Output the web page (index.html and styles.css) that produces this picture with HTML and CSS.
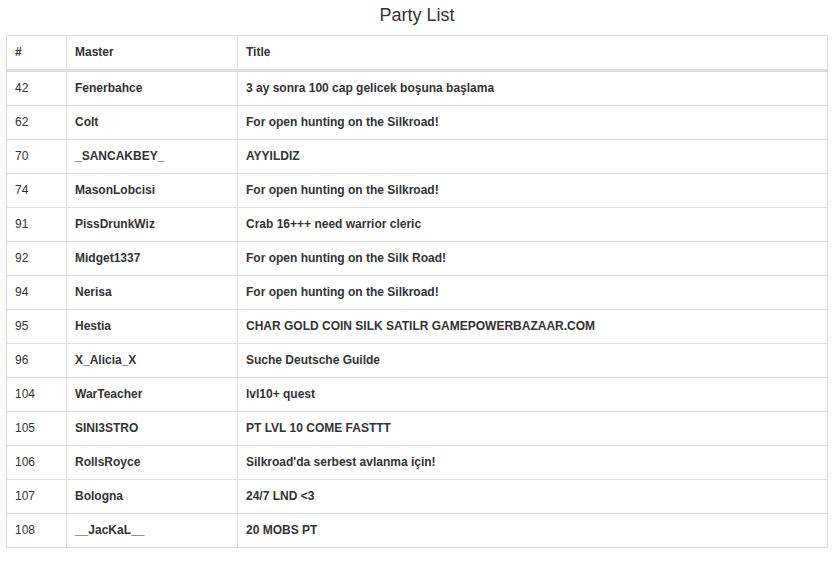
FILE: index.html
```html
<!DOCTYPE html>
<html lang="en">
<head>
<meta charset="utf-8">
<title>Party List</title>
<link rel="stylesheet" href="styles.css">
</head>
<body>
<div class="page">
  <h3 class="page-title">Party List</h3>
  <table class="party-table">
    <colgroup>
      <col class="col-id">
      <col class="col-master">
      <col class="col-title">
    </colgroup>
    <thead>
      <tr><th>#</th><th>Master</th><th>Title</th></tr>
    </thead>
    <tbody>
      <tr><td class="num">42</td><td>Fenerbahce</td><td>3 ay sonra 100 cap gelicek boşuna başlama</td></tr>
      <tr><td class="num">62</td><td>Colt</td><td>For open hunting on the Silkroad!</td></tr>
      <tr><td class="num">70</td><td>_SANCAKBEY_</td><td>AYYILDIZ</td></tr>
      <tr><td class="num">74</td><td>MasonLobcisi</td><td>For open hunting on the Silkroad!</td></tr>
      <tr><td class="num">91</td><td>PissDrunkWiz</td><td>Crab 16+++ need warrior cleric</td></tr>
      <tr><td class="num">92</td><td>Midget1337</td><td>For open hunting on the Silk Road!</td></tr>
      <tr><td class="num">94</td><td>Nerisa</td><td>For open hunting on the Silkroad!</td></tr>
      <tr><td class="num">95</td><td>Hestia</td><td>CHAR GOLD COIN SILK SATILR GAMEPOWERBAZAAR.COM</td></tr>
      <tr><td class="num">96</td><td>X_Alicia_X</td><td>Suche Deutsche Guilde</td></tr>
      <tr><td class="num">104</td><td>WarTeacher</td><td>lvl10+ quest</td></tr>
      <tr><td class="num">105</td><td>SINI3STRO</td><td>PT LVL 10 COME FASTTT</td></tr>
      <tr><td class="num">106</td><td>RollsRoyce</td><td>Silkroad'da serbest avlanma için!</td></tr>
      <tr><td class="num">107</td><td>Bologna</td><td>24/7 LND &lt;3</td></tr>
      <tr><td class="num">108</td><td>__JacKaL__</td><td>20 MOBS PT</td></tr>
    </tbody>
  </table>
</div>
</body>
</html>
```

FILE: styles.css
```css
html, body {
  margin: 0;
  padding: 0;
  background: #fff;
}

body {
  font-family: "Liberation Sans", Arial, sans-serif;
  font-size: 12px;
  line-height: 1.42857;
  color: #333;
}

.page {
  padding: 0 6px;
}

.page-title {
  margin: 5px 0 10px;
  font-size: 18px;
  font-weight: 400;
  line-height: 20px;
  text-align: center;
  color: #333;
}

.party-table {
  width: 100%;
  border-collapse: collapse;
  border-spacing: 0;
  border: 1px solid #ddd;
  table-layout: fixed;
}

.col-id { width: 60px; }
.col-master { width: 171px; }

.party-table th,
.party-table td {
  padding: 8px;
  border: 1px solid #ddd;
  text-align: left;
  vertical-align: top;
  line-height: 17px;
  font-weight: 700;
  white-space: nowrap;
}

.party-table thead th {
  border-bottom: 3px solid #ddd;
  vertical-align: bottom;
}

.party-table td.num {
  font-weight: 400;
}
```
